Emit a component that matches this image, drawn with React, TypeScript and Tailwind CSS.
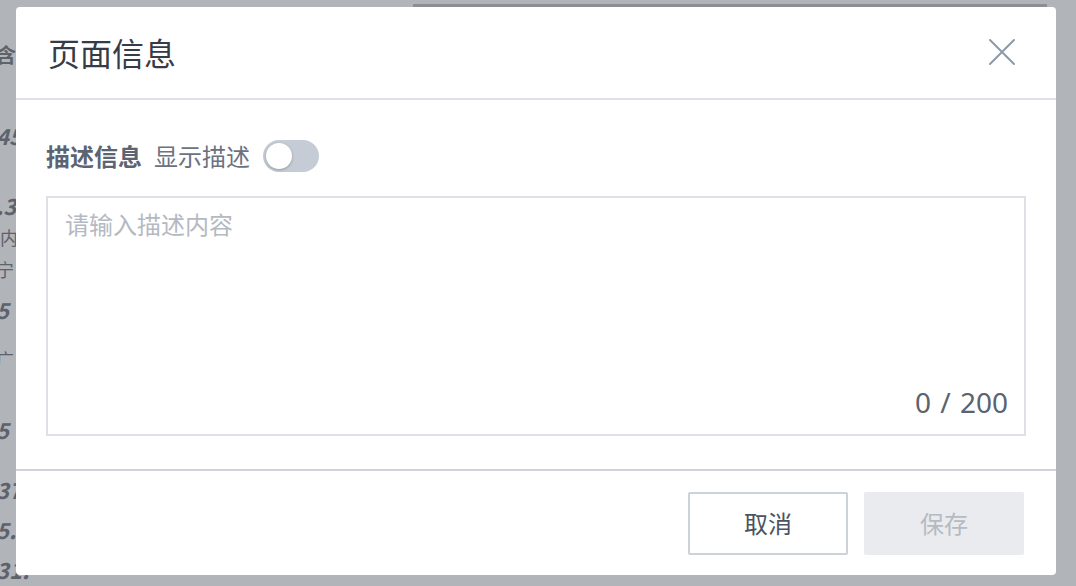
import React from "react";

const font = { fontFamily: '"Noto Sans CJK SC", "Noto Sans", sans-serif' };

function Background() {
  const leftItems: { t: string; h: number; cls: string }[] = [
    { t: "含礼", h: 60, cls: "text-[20px] font-semibold" },
    { t: "45", h: 100, cls: "text-[22px] font-bold italic" },
    { t: ".3", h: 40, cls: "text-[22px] font-bold italic" },
    { t: " 内", h: 24, cls: "text-[18px]" },
    { t: "宁", h: 40, cls: "text-[18px]" },
    { t: "5", h: 40, cls: "text-[22px] font-bold italic" },
    { t: "广", h: 60, cls: "text-[18px]" },
    { t: "5", h: 80, cls: "text-[22px] font-bold italic" },
    { t: "37", h: 40, cls: "text-[22px] font-bold italic" },
    { t: "5.2", h: 40, cls: "text-[22px] font-bold italic" },
    { t: "31.", h: 40, cls: "text-[22px] font-bold italic" },
  ];
  const cells = [20, 115, 60, 35, 42, 48, 35, 70, 130, 125, 130, 125, 130, 111];
  const cellText = ["", "", "518", "", "", "", "", "", "0", "0", "0", "0", "0", ""];
  return (
    <div className="flex h-full w-full flex-col bg-[#b1b4b9] text-[#5d626b]">
      <div className="flex h-[5px] w-full">
        <div className="w-[413px]" />
        <div className="mt-[4px] h-[3px] w-[634px] bg-[#8b8e93]" />
      </div>
      <div className="flex flex-1 flex-col pt-[20px]">
        {leftItems.map((it, i) => (
          <div
            key={i}
            className={`flex items-center whitespace-pre leading-none ${it.cls}`}
            style={{ height: it.h, marginLeft: -4 }}
          >
            {it.t}
          </div>
        ))}
      </div>
      <div className="flex h-[20px] w-full border-t border-[#9fa3a9]">
        {cells.map((w, i) => (
          <div
            key={i}
            className="flex items-end justify-center border-r border-[#9a9ea4] text-[22px] italic leading-none"
            style={{ width: w }}
          >
            {cellText[i]}
          </div>
        ))}
      </div>
    </div>
  );
}

export default function App() {
  return (
    <div className="relative h-[586px] w-[1076px] overflow-hidden" style={font}>
      <Background />
      <div className="absolute left-[16px] top-[7px] flex h-[568px] w-[1040px] flex-col rounded-[4px] bg-white">
        <div className="flex h-[93px] items-center justify-between border-b-2 border-[#dde0e5] pb-[2px] pl-[32px] pr-[40px]">
          <div className="text-[32px] leading-none text-[#353c48]">页面信息</div>
          <svg width="28" height="28" viewBox="0 0 28 28">
            <path d="M2 2 L26 26 M26 2 L2 26" stroke="#8d99aa" strokeWidth="2" strokeLinecap="round" />
          </svg>
        </div>
        <div className="flex flex-1 flex-col px-[30px] pt-[40px]">
          <div className="flex h-[32px] items-center">
            <span className="text-[24px] font-bold leading-none text-[#5c6472]">描述信息</span>
            <span className="ml-[12px] text-[24px] leading-none text-[#6b7280]">显示描述</span>
            <div className="ml-[13px] flex h-[32px] w-[56px] items-center rounded-full bg-[#c5ccd5] px-[3px]">
              <div className="h-[26px] w-[26px] rounded-full bg-white shadow-[0_1px_3px_rgba(0,0,0,0.25)]" />
            </div>
          </div>
          <div className="mt-[24px] flex h-[240px] flex-col justify-between border-2 border-[#dde0e5] pb-[18px] pl-[17px] pr-[16px] pt-[10px]">
            <div className="text-[24px] leading-[32px] text-[#b4b9c2]">请输入描述内容</div>
            <div className="self-end text-[28px] leading-none text-[#5b6370]" style={{ fontFamily: '"Noto Sans", sans-serif', wordSpacing: "2px" }}>
              0 / 200
            </div>
          </div>
        </div>
        <div className="flex h-[106px] items-center justify-end gap-[16px] border-t-2 border-[#d0d4da] pr-[32px]">
          <button className="flex h-[63px] w-[160px] items-center justify-center rounded-[2px] border-2 border-[#cdd1d8] bg-white text-[24px] text-[#4b5363]">
            取消
          </button>
          <button className="flex h-[63px] w-[160px] items-center justify-center rounded-[2px] bg-[#e9ebee] text-[24px] text-[#b6bac1]">
            保存
          </button>
        </div>
      </div>
    </div>
  );
}
